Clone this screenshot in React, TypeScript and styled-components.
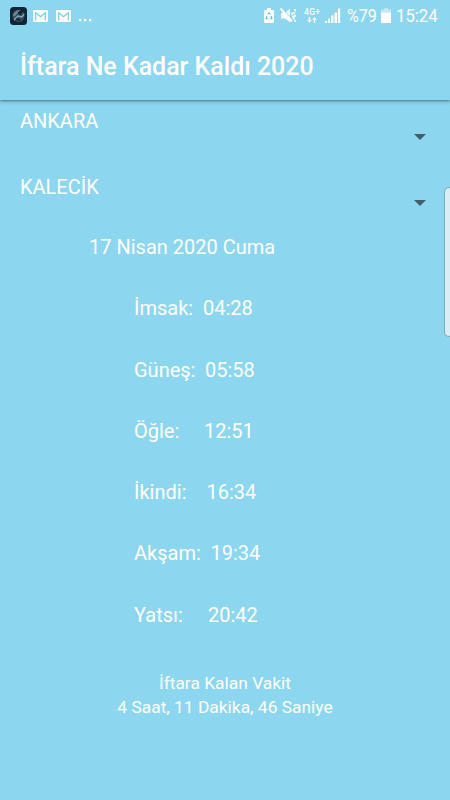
import React from "react";
import styled, { createGlobalStyle } from "styled-components";

const Global = createGlobalStyle`
  * { box-sizing: border-box; }
  body { margin: 0; background: #8cd6f0; }
`;

const Screen = styled.div`
  position: relative;
  width: 450px;
  height: 800px;
  overflow: hidden;
  display: flex;
  flex-direction: column;
  background: #8cd6f0;
  color: #fff;
  font-family: Roboto, sans-serif;
`;

const Header = styled.header`
  height: 100px;
  flex: none;
  box-shadow: 0 1px 2px rgba(0, 0, 0, 0.3), 0 2px 4px rgba(0, 0, 0, 0.18);
`;

const StatusBar = styled.div`
  height: 32px;
  display: flex;
  align-items: center;
  justify-content: space-between;
  padding: 0 12px 0 10px;
`;

const StatusGroup = styled.div`
  display: flex;
  align-items: center;
`;

const StatusIcon = styled.svg<{ $gap: number }>`
  display: block;
  flex: none;
  margin-right: ${(p) => p.$gap}px;
`;

const StatusText = styled.span<{ $width: number; $scale: number }>`
  display: block;
  width: ${(p) => p.$width}px;
  font-size: 19.2px;
  line-height: 32px;
  white-space: nowrap;
  transform: scaleX(${(p) => p.$scale});
  transform-origin: left center;
`;

const Title = styled.h1`
  margin: 0;
  padding: 1px 20px 0;
  font-size: 24.95px;
  line-height: 68px;
  font-weight: 500;
  white-space: nowrap;
`;

const Picker = styled.div`
  height: 66px;
  flex: none;
  display: flex;
  justify-content: space-between;
  padding: 9px 24px 0 20px;
  font-size: 20px;
  line-height: 24px;
`;

const Arrow = styled.svg`
  display: block;
  margin-top: 25px;
`;

const Day = styled.div`
  padding: 3px 0 0 89px;
  height: 45.7px;
  font-size: 20px;
  line-height: 24px;
  white-space: nowrap;
`;

const Times = styled.div`
  display: flex;
  flex-direction: column;
`;

const TimeRow = styled.div`
  display: flex;
  align-items: center;
  height: 61.25px;
  padding-left: 134px;
  font-size: 20px;
`;

const Label = styled.span<{ $width: number }>`
  width: ${(p) => p.$width}px;
  white-space: nowrap;
`;

const Countdown = styled.div`
  margin-top: 25.8px;
  text-align: center;
  font-size: 17.4px;
  line-height: 24px;
`;

const EdgeHandle = styled.div`
  position: absolute;
  top: 187px;
  right: -4px;
  width: 10px;
  height: 150px;
  border: 1px solid #79aabd;
  border-radius: 5px;
  background: #d8edf5;
`;

const times = [
  { label: "İmsak:", value: "04:28", width: 69 },
  { label: "Güneş:", value: "05:58", width: 71 },
  { label: "Öğle:", value: "12:51", width: 70 },
  { label: "İkindi:", value: "16:34", width: 72.5 },
  { label: "Akşam:", value: "19:34", width: 76.5 },
  { label: "Yatsı:", value: "20:42", width: 74 },
];

const MailIcon = ({ gap }: { gap: number }) => (
  <StatusIcon $gap={gap} width="15" height="12" viewBox="0 0 15 12">
    <rect width="15" height="12" rx="1.2" fill="#fff" />
    <path d="M2.7 10.5V2.7L7.5 6.7L12.3 2.7V10.5" fill="none" stroke="#78cbe8" strokeWidth="1.2" />
  </StatusIcon>
);

const DownArrow = () => (
  <Arrow width="12" height="6" viewBox="0 0 12 6">
    <path d="M0 0H12L6 6Z" fill="#40616c" />
  </Arrow>
);

export default function App() {
  return (
    <>
      <Global />
      <Screen>
        <Header>
          <StatusBar>
            <StatusGroup>
              <StatusIcon $gap={6} width="17" height="18" viewBox="0 0 17 18">
                <rect width="17" height="18" rx="3.5" fill="#102536" />
                <circle cx="8.5" cy="9" r="6.2" fill="#2b4b5e" />
                <path d="M3 8Q5 3 10 3L8 6L4 10Z" fill="#6a8997" />
                <path d="M4 13L8 9L12 10L14 7" fill="none" stroke="#8ba7b1" strokeWidth="1.4" />
                <path d="M8 6L12 4L10 8M6 12L10 13" fill="none" stroke="#10202d" strokeWidth="1.5" />
              </StatusIcon>
              <MailIcon gap={8} />
              <MailIcon gap={8} />
              <StatusIcon $gap={0} width="13" height="14" viewBox="0 0 13 14">
                <path d="M0 10H2.3V12.3H0ZM5 10H7.3V12.3H5ZM10 10H12.3V12.3H10Z" fill="#fff" />
              </StatusIcon>
            </StatusGroup>
            <StatusGroup>
              <StatusIcon $gap={6} width="10" height="16" viewBox="0 0 10 16">
                <path d="M3 0H7V2H9Q10 2 10 3V14Q10 15 9 15H1Q0 15 0 14V3Q0 2 1 2H3Z" fill="#fff" />
                <path d="M3.5 6.5L5 4.8L6.5 6.5M7 8L8 10.7H6M4.2 10.7H2L3 8" fill="none" stroke="#69bedb" strokeWidth="1.1" />
              </StatusIcon>
              <StatusIcon $gap={7} width="17" height="16" viewBox="0 0 17 16">
                <path d="M1 5H5L10 .7V14.3L5 10.5H1Z" fill="#fff" />
                <path d="M3 1L12 11" stroke="#8cd6f0" strokeWidth="1" />
                <path d="M.5 .5L12 13.5" stroke="#fff" strokeWidth="2.2" />
                <path d="M12 4.5V7M13 7.5V10M15 1V3.5M14 4V6M15 6.5V9M14 9.5V11.5M15 12V14" stroke="#fff" strokeWidth="1.6" />
              </StatusIcon>
              <StatusIcon $gap={4} width="17" height="16" viewBox="0 0 17 16">
                <text x="0" y="7" fill="#fff" fontFamily="Roboto, sans-serif" fontSize="8.5" fontWeight="500" textLength="16">4G+</text>
                <path d="M3.3 12H4.8V9H6.2V12H7.7L5.5 14.8ZM8.3 11.8L10.5 9L12.7 11.8H11.2V14.8H9.8V11.8Z" fill="#fff" />
              </StatusIcon>
              <StatusIcon $gap={6} width="16" height="16" viewBox="0 0 16 16">
                <path d="M0 13H2V15H0ZM3 10.5H5V15H3ZM6 7.5H8.5V15H6ZM9.5 4.5H12V15H9.5ZM13 1L15.2 0V15H13Z" fill="#fff" />
              </StatusIcon>
              <StatusText $width={34} $scale={0.84}>%79</StatusText>
              <StatusIcon $gap={5} width="10" height="16" viewBox="0 0 10 16">
                <path d="M3 0H7V1.5H10V4.5H0V1.5H3Z" fill="#c2e8f5" />
                <path d="M0 4.5H10V15H0Z" fill="#fff" />
              </StatusIcon>
              <StatusText $width={42} $scale={0.87}>15:24</StatusText>
            </StatusGroup>
          </StatusBar>
          <Title>İftara Ne Kadar Kaldı 2020</Title>
        </Header>
        <Picker>ANKARA<DownArrow /></Picker>
        <Picker>KALECİK<DownArrow /></Picker>
        <Day>17 Nisan 2020 Cuma</Day>
        <Times>
          {times.map((t) => (
            <TimeRow key={t.label}>
              <Label $width={t.width}>{t.label}</Label>
              <span>{t.value}</span>
            </TimeRow>
          ))}
        </Times>
        <Countdown>
          <div>İftara Kalan Vakit</div>
          <div>4 Saat, 11 Dakika, 46 Saniye</div>
        </Countdown>
        <EdgeHandle />
      </Screen>
    </>
  );
}
